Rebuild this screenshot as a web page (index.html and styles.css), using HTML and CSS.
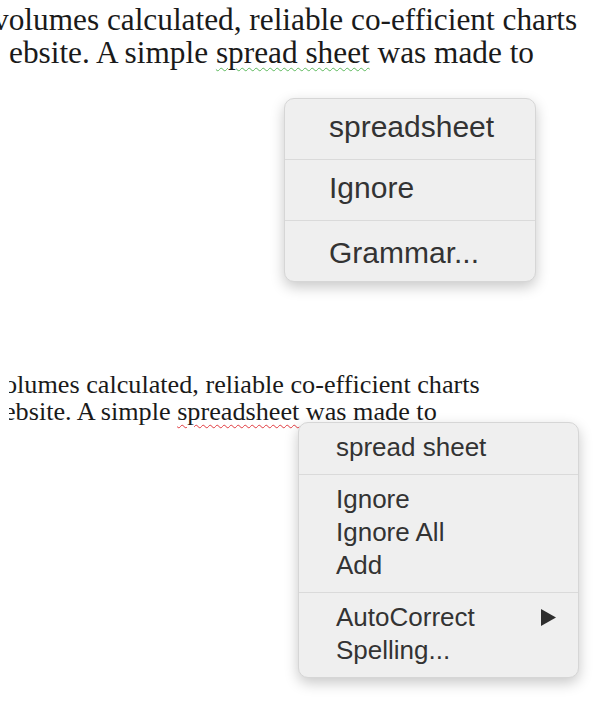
FILE: index.html
```html
<!DOCTYPE html>
<html lang="en">
<head>
  <meta charset="UTF-8" />
  <title>Spelling suggestions</title>
  <link rel="stylesheet" href="styles.css">
</head>
<body>
  <div class="page">

    <div class="doc doc-large">
      <div class="line first">volumes calculated, reliable co-efficient charts</div>
      <div class="line second">ebsite. A simple <span class="squiggle green">spread sheet</span> was made to</div>
    </div>

    <div class="menu menu-large">
      <div class="menu-row">spreadsheet</div>
      <div class="menu-row">Ignore</div>
      <div class="menu-row">Grammar...</div>
    </div>

    <div class="doc doc-small">
      <div class="line first">olumes calculated, reliable co-efficient charts</div>
      <div class="line second">ebsite. A simple <span class="squiggle red">spreadsheet</span> was made to</div>
    </div>

    <div class="menu menu-small">
      <div class="menu-group">
        <div class="menu-item">spread sheet</div>
      </div>
      <div class="menu-group">
        <div class="menu-item">Ignore</div>
        <div class="menu-item">Ignore All</div>
        <div class="menu-item">Add</div>
      </div>
      <div class="menu-group">
        <div class="menu-item has-sub">
          AutoCorrect
          <svg class="sub-arrow" width="15" height="17" viewBox="0 0 15 17"><polygon points="0,0 15,8.5 0,17" fill="#2e2e2e"/></svg>
        </div>
        <div class="menu-item">Spelling...</div>
      </div>
    </div>

  </div>
</body>
</html>
```

FILE: styles.css
```css
body {
  margin: 0;
  background: #fff;
}

.page {
  position: relative;
  width: 600px;
  height: 715px;
  overflow: hidden;
}

.doc {
  font-family: "Liberation Serif", "Times New Roman", serif;
  color: #1a1a1a;
  white-space: nowrap;
  overflow: hidden;
}

.doc-large {
  font-size: 31.3px;
  line-height: 33px;
  padding-top: 3px;
  padding-bottom: 8px;
}

.doc-large .first {
  margin-left: -7px;
}

.doc-large .second {
  margin-left: 9px;
}

.doc-small {
  font-size: 26.2px;
  line-height: 27px;
  margin-top: 294px;
  margin-left: 9px;
  padding-bottom: 8px;
}

.doc-small .first {
  margin-left: -5px;
}

.doc-small .second {
  margin-left: -5px;
}

.squiggle {
  text-decoration-line: underline;
  text-decoration-style: wavy;
  text-decoration-thickness: 1px;
  text-underline-offset: 4px;
}

.squiggle.green {
  text-decoration-color: #5cb85c;
}

.squiggle.red {
  text-decoration-color: #e0393e;
}

.menu {
  position: absolute;
  box-sizing: border-box;
  background: #efefef;
  border: 1px solid #d6d6d6;
  border-radius: 10px;
  box-shadow: 0 5px 14px rgba(0,0,0,0.22);
  font-family: "Liberation Sans", Arial, sans-serif;
  color: #333;
}

.menu-large {
  top: 98px;
  left: 284px;
  width: 252px;
  font-size: 30px;
  line-height: 34px;
}

.menu-row {
  padding: 11px 0 15px 44px;
}

.menu-row + .menu-row {
  border-top: 1px solid #dadada;
}

.menu-row:last-child {
  padding: 15px 0 11px 44px;
}

.menu-small {
  top: 422px;
  left: 298px;
  width: 281px;
  font-size: 26px;
  line-height: 33px;
}

.menu-group {
  padding: 8px 0 10px;
}

.menu-group + .menu-group {
  border-top: 1px solid #dadada;
}

.menu-item {
  padding: 0 22px 0 37px;
  display: flex;
  align-items: center;
  justify-content: space-between;
}
```
